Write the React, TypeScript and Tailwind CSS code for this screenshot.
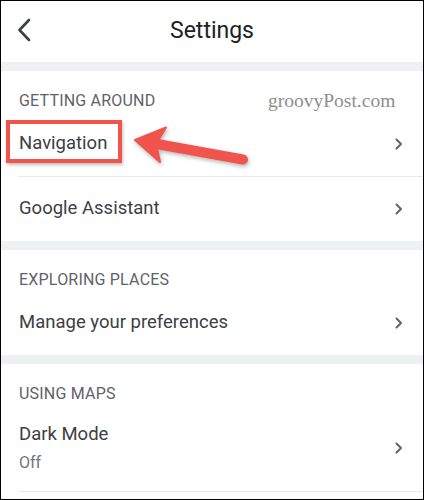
import React from "react";

function Chevron() {
  return (
    <svg width="8" height="12" viewBox="0 0 8 12" className="shrink-0">
      <polyline
        points="1.5,1.5 6,6 1.5,10.5"
        fill="none"
        stroke="#5f6368"
        strokeWidth="2"
        strokeLinecap="round"
        strokeLinejoin="round"
      />
    </svg>
  );
}

function SectionTitle({ children }: { children: React.ReactNode }) {
  return (
    <div className="h-[41px] pl-[18px] pt-5 text-[16px] leading-5 tracking-[0.2px] text-[#5f6368]">
      {children}
    </div>
  );
}

function Row({ label }: { label: string }) {
  return (
    <div className="flex h-16 items-center justify-between pl-[18px] pr-5">
      <span className="text-[18.5px] text-[#3c4043]">{label}</span>
      <Chevron />
    </div>
  );
}

function Band() {
  return <div className="h-[9px] bg-[#eef1f1]" />;
}

export default function App() {
  return (
    <div className="h-[500px] w-[424px] overflow-hidden border border-black bg-white font-['Roboto','Liberation_Sans',sans-serif]">
      <header className="relative flex h-[61px] items-center justify-center">
        <svg width="14" height="24" viewBox="0 0 14 24" className="absolute left-[16px] top-[17px]">
          <polyline
            points="12,2 2.5,12 12,22"
            fill="none"
            stroke="#3c4043"
            strokeWidth="2.6"
            strokeLinecap="round"
            strokeLinejoin="round"
          />
        </svg>
        <h1 className="text-[23px] text-[#202124]">Settings</h1>
      </header>
      <Band />

      <section className="relative">
        <SectionTitle>GETTING AROUND</SectionTitle>
        <span className="absolute left-[267px] top-[18px] font-['Liberation_Serif',serif] text-[19.5px] leading-6 text-[#8e8e8e]">
          groovyPost.com
        </span>
        <div className="relative">
          <Row label="Navigation" />
          <div className="absolute left-[5px] top-[8px] h-[43px] w-[116px] border-4 border-[#f0544c] shadow-[1px_2px_3px_rgba(0,0,0,0.25)]" />
          <svg
            width="260"
            height="64"
            viewBox="0 0 260 64"
            className="absolute left-0 top-0 drop-shadow-[1px_2px_2px_rgba(0,0,0,0.3)]"
          >
            <line x1="156" y1="32" x2="242" y2="47.5" stroke="#f0544c" strokeWidth="10" strokeLinecap="round" />
            <polygon points="134,28 165,15.5 155,31.6 159,50" fill="#f0544c" stroke="#f0544c" strokeWidth="2" strokeLinejoin="round" />
          </svg>
        </div>
        <div className="ml-[17px] h-px bg-[#e8eaed]" />
        <Row label="Google Assistant" />
      </section>
      <Band />

      <section>
        <SectionTitle>EXPLORING PLACES</SectionTitle>
        <Row label="Manage your preferences" />
      </section>
      <Band />

      <section>
        <SectionTitle>USING MAPS</SectionTitle>
        <div className="flex h-[86px] items-center justify-between pl-[18px] pr-5">
          <div className="flex flex-col gap-[8px]">
            <span className="text-[18.5px] leading-[22px] text-[#3c4043]">Dark Mode</span>
            <span className="text-[16px] leading-5 text-[#70757a]">Off</span>
          </div>
          <Chevron />
        </div>
        <div className="ml-[17px] h-px bg-[#e8eaed]" />
      </section>
    </div>
  );
}
